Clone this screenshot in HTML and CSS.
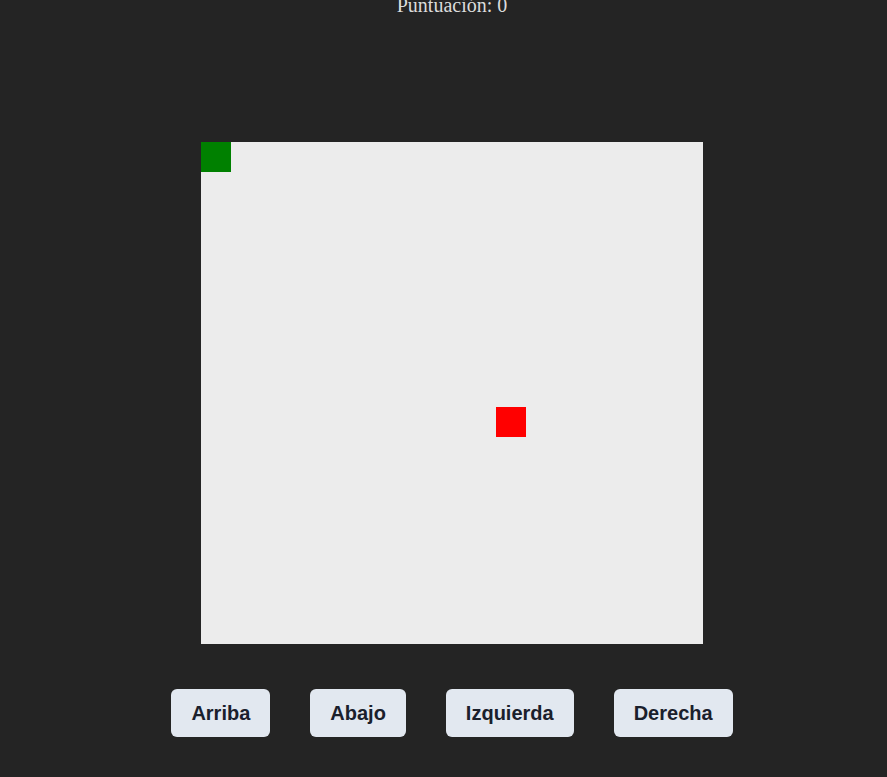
FILE: index.html
```html
<!DOCTYPE html>
<html lang="es">
<head>
<meta charset="utf-8">
<title>Snake</title>
<link rel="stylesheet" href="styles.css">
</head>
<body>
<main class="app">
  <div class="score">Puntuación: 0</div>
  <div class="board">
    <div class="cell snake" style="left:0;top:0"></div>
    <div class="cell food" style="left:295px;top:265px"></div>
  </div>
  <div class="controls">
    <button class="btn">Arriba</button>
    <button class="btn">Abajo</button>
    <button class="btn">Izquierda</button>
    <button class="btn">Derecha</button>
  </div>
</main>
</body>
</html>
```
FILE: styles.css
```css
html, body {
  margin: 0;
  padding: 0;
  background: #242424;
  height: 100%;
  overflow: hidden;
}
.app {
  display: flex;
  flex-direction: column;
  align-items: center;
  padding-left: 17px;
}
.score {
  font-family: "Liberation Serif", "Times New Roman", serif;
  font-size: 20px;
  line-height: 23px;
  color: #dcdcdc;
  margin-top: -6px;
}
.board {
  position: relative;
  width: 502px;
  height: 502px;
  background: #ececec;
  margin-top: 125px;
}
.cell {
  position: absolute;
  width: 30px;
  height: 30px;
}
.snake { background: #008000; }
.food { background: #ff0000; }
.controls {
  display: flex;
  gap: 40px;
  margin-top: 45px;
}
.btn {
  font-family: "Liberation Sans", Arial, sans-serif;
  font-weight: bold;
  font-size: 20px;
  line-height: 24px;
  padding: 12px 20px;
  border: none;
  border-radius: 6px;
  background: #e2e8f0;
  color: #1a202c;
  cursor: pointer;
}
```
